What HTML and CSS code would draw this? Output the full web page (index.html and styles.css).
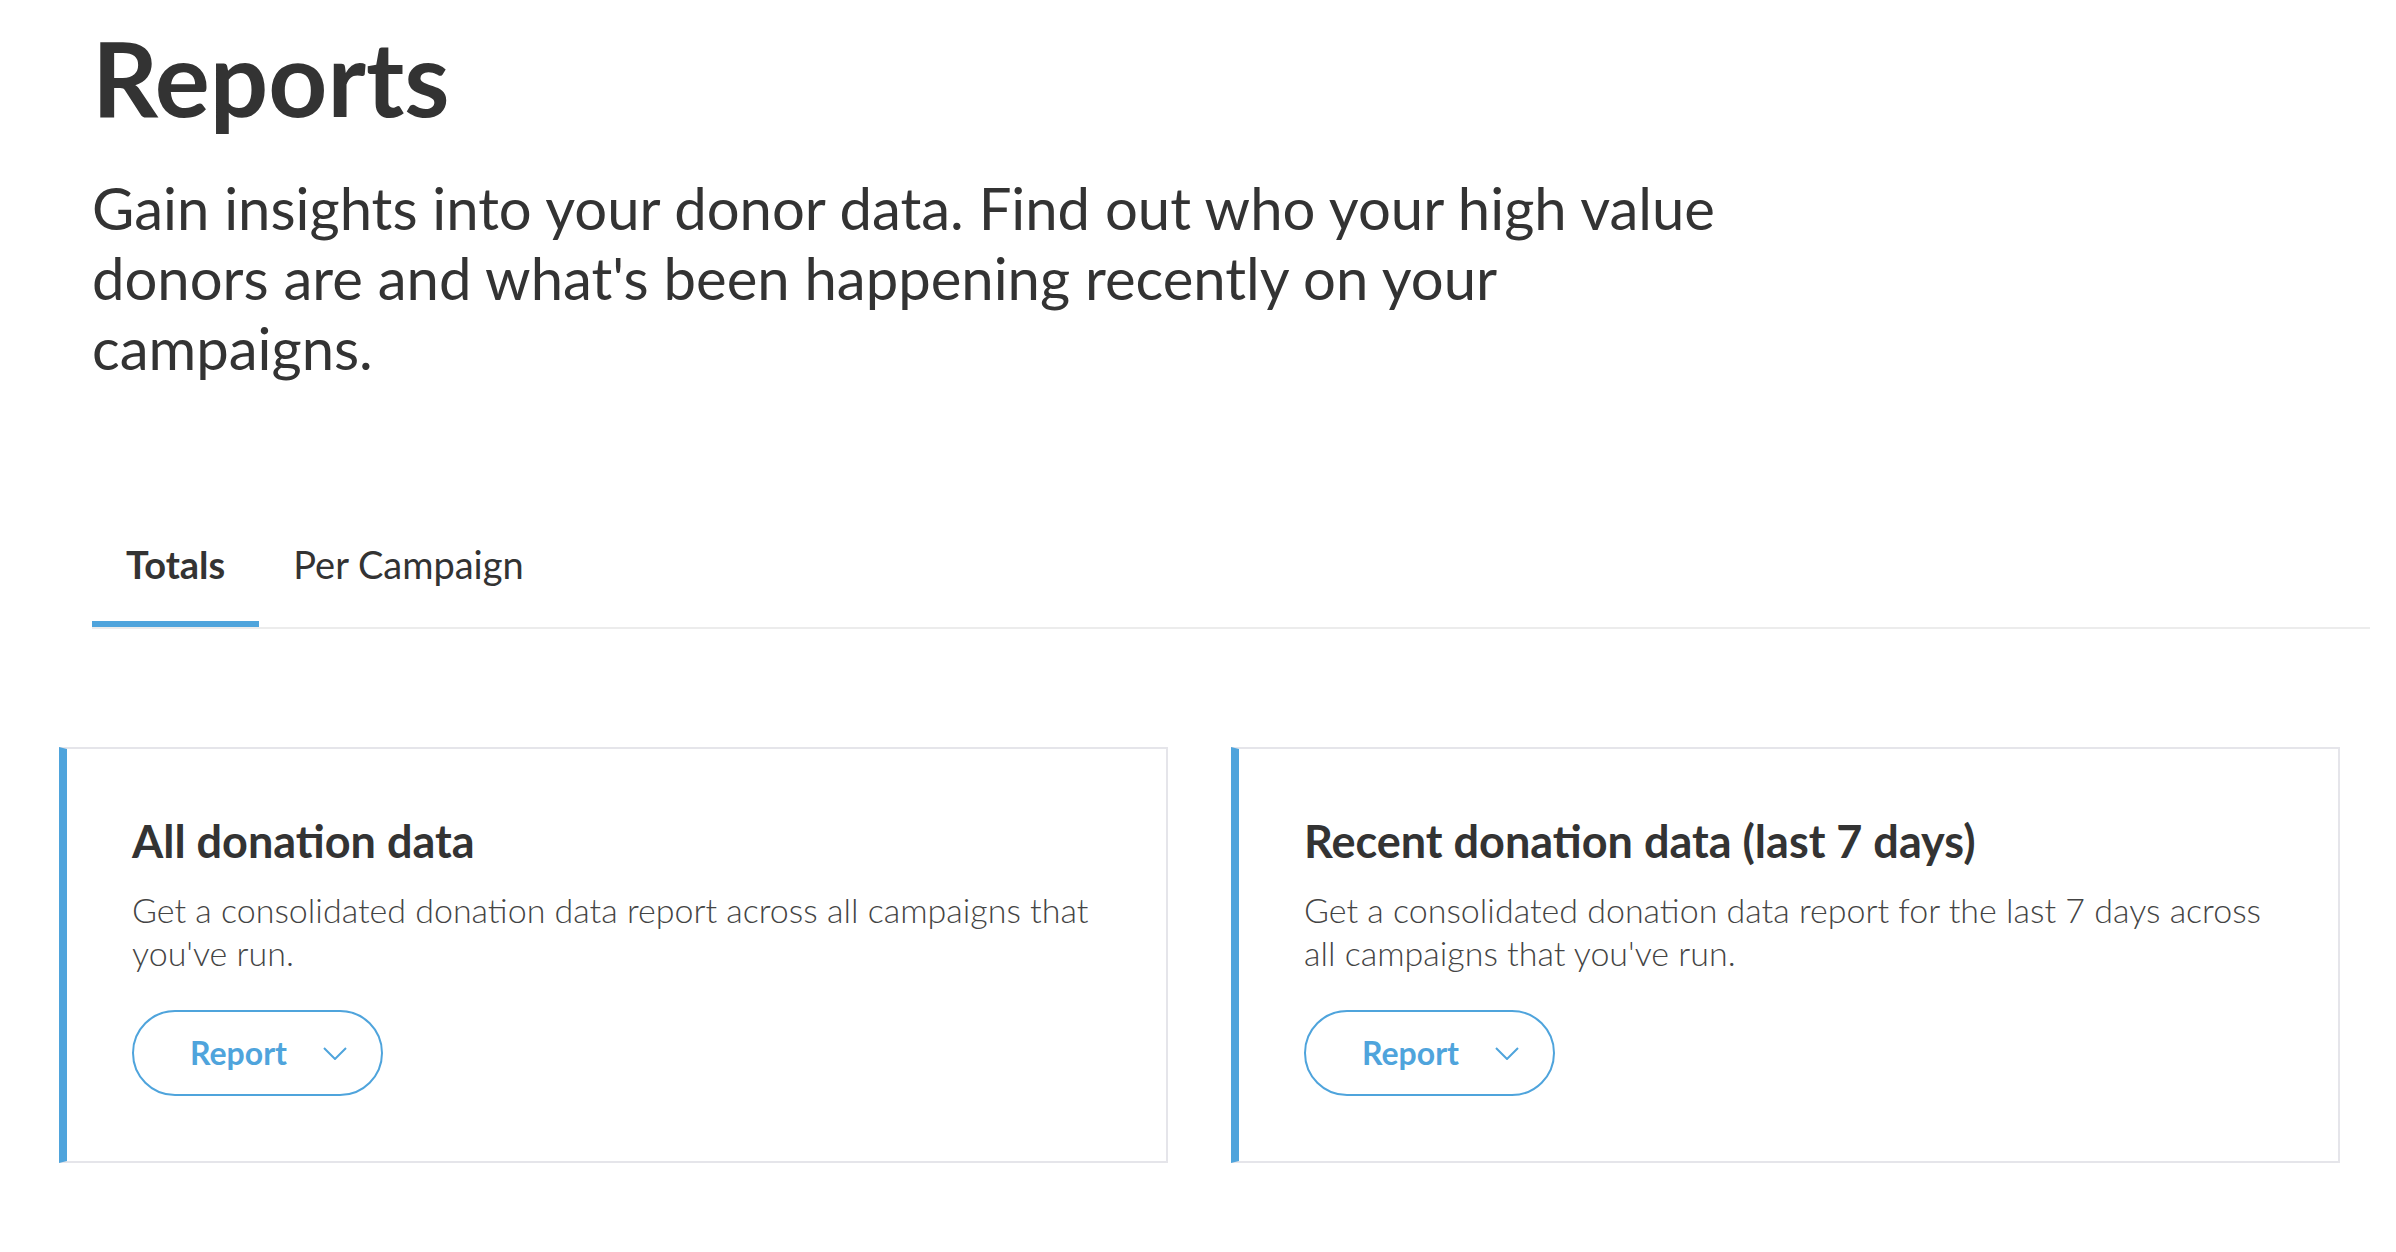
FILE: index.html
```html
<!DOCTYPE html>
<html lang="en">
<head>
<meta charset="utf-8">
<title>Reports</title>
<link rel="stylesheet" href="styles.css">
</head>
<body>
<main class="page">
  <header class="intro">
    <h1 class="title">Reports</h1>
    <p class="lead">Gain insights into your donor data. Find out who your high value donors are and what's been happening recently on your campaigns.</p>
  </header>

  <nav class="tabs">
    <a class="tab tab-active">Totals</a>
    <a class="tab">Per Campaign</a>
  </nav>

  <section class="cards">
    <article class="card">
      <h2 class="card-title">All donation data</h2>
      <p class="card-text">Get a consolidated donation data report across all campaigns that you've run.</p>
      <button class="btn" type="button">
        <span class="btn-label">Report</span>
        <svg class="chev" viewBox="0 0 24 13" width="24" height="13" aria-hidden="true"><polyline points="1,1 12,12 23,1" fill="none" stroke="currentColor" stroke-width="2"/></svg>
      </button>
    </article>
    <article class="card">
      <h2 class="card-title">Recent donation data (last 7 days)</h2>
      <p class="card-text">Get a consolidated donation data report for the last 7 days across all campaigns that you've run.</p>
      <button class="btn" type="button">
        <span class="btn-label">Report</span>
        <svg class="chev" viewBox="0 0 24 13" width="24" height="13" aria-hidden="true"><polyline points="1,1 12,12 23,1" fill="none" stroke="currentColor" stroke-width="2"/></svg>
      </button>
    </article>
  </section>
</main>
</body>
</html>
```

FILE: styles.css
```css
* { box-sizing: border-box; }

html, body {
  margin: 0;
  padding: 0;
  background: #ffffff;
}

body {
  font-family: "Lato", "Source Sans Pro", "Noto Sans", sans-serif;
  color: #333333;
}

.page {
  padding: 25px 26px 0 92px;
}

.title {
  margin: 0;
  font-size: 103px;
  line-height: 104px;
  font-weight: 700;
  letter-spacing: 0;
}

.lead {
  margin: 44px 0 0 0;
  max-width: 1660px;
  font-size: 58px;
  line-height: 70px;
  font-weight: 400;
}

.tabs {
  margin-top: 127px;
  display: flex;
  border-bottom: 2px solid #ececec;
}

.tab {
  display: block;
  padding: 27px 34px 30px 34px;
  font-size: 38px;
  line-height: 54px;
  font-weight: 400;
  color: #333333;
  border-bottom: 6px solid transparent;
}

.tab-active {
  font-weight: 700;
  border-bottom-color: #4fa4dc;
}

.cards {
  margin: 118px 30px 0 -33px;
  display: grid;
  grid-template-columns: 1fr 1fr;
  gap: 63px;
}

.card {
  border: 2px solid #e5e5ea;
  border-left: 8px solid #4fa4dc;
  padding: 66px 65px 65px 65px;
}

.card-title {
  margin: 0;
  font-size: 45px;
  line-height: 52px;
  font-weight: 700;
  color: #333333;
}

.card-text {
  margin: 21px 0 0 0;
  font-size: 34px;
  line-height: 43px;
  font-weight: 300;
  color: #444444;
}

.btn {
  margin-top: 36px;
  display: flex;
  align-items: center;
  gap: 36px;
  height: 86px;
  width: 251px;
  padding: 0 35px 0 56px;
  border: 2px solid #4fa4dc;
  border-radius: 43px;
  background: #ffffff;
  color: #4fa4dc;
  font-family: inherit;
  cursor: pointer;
}

.btn-label {
  font-size: 32px;
  font-weight: 700;
  line-height: 40px;
}

.chev {
  display: block;
  flex: none;
}
```
